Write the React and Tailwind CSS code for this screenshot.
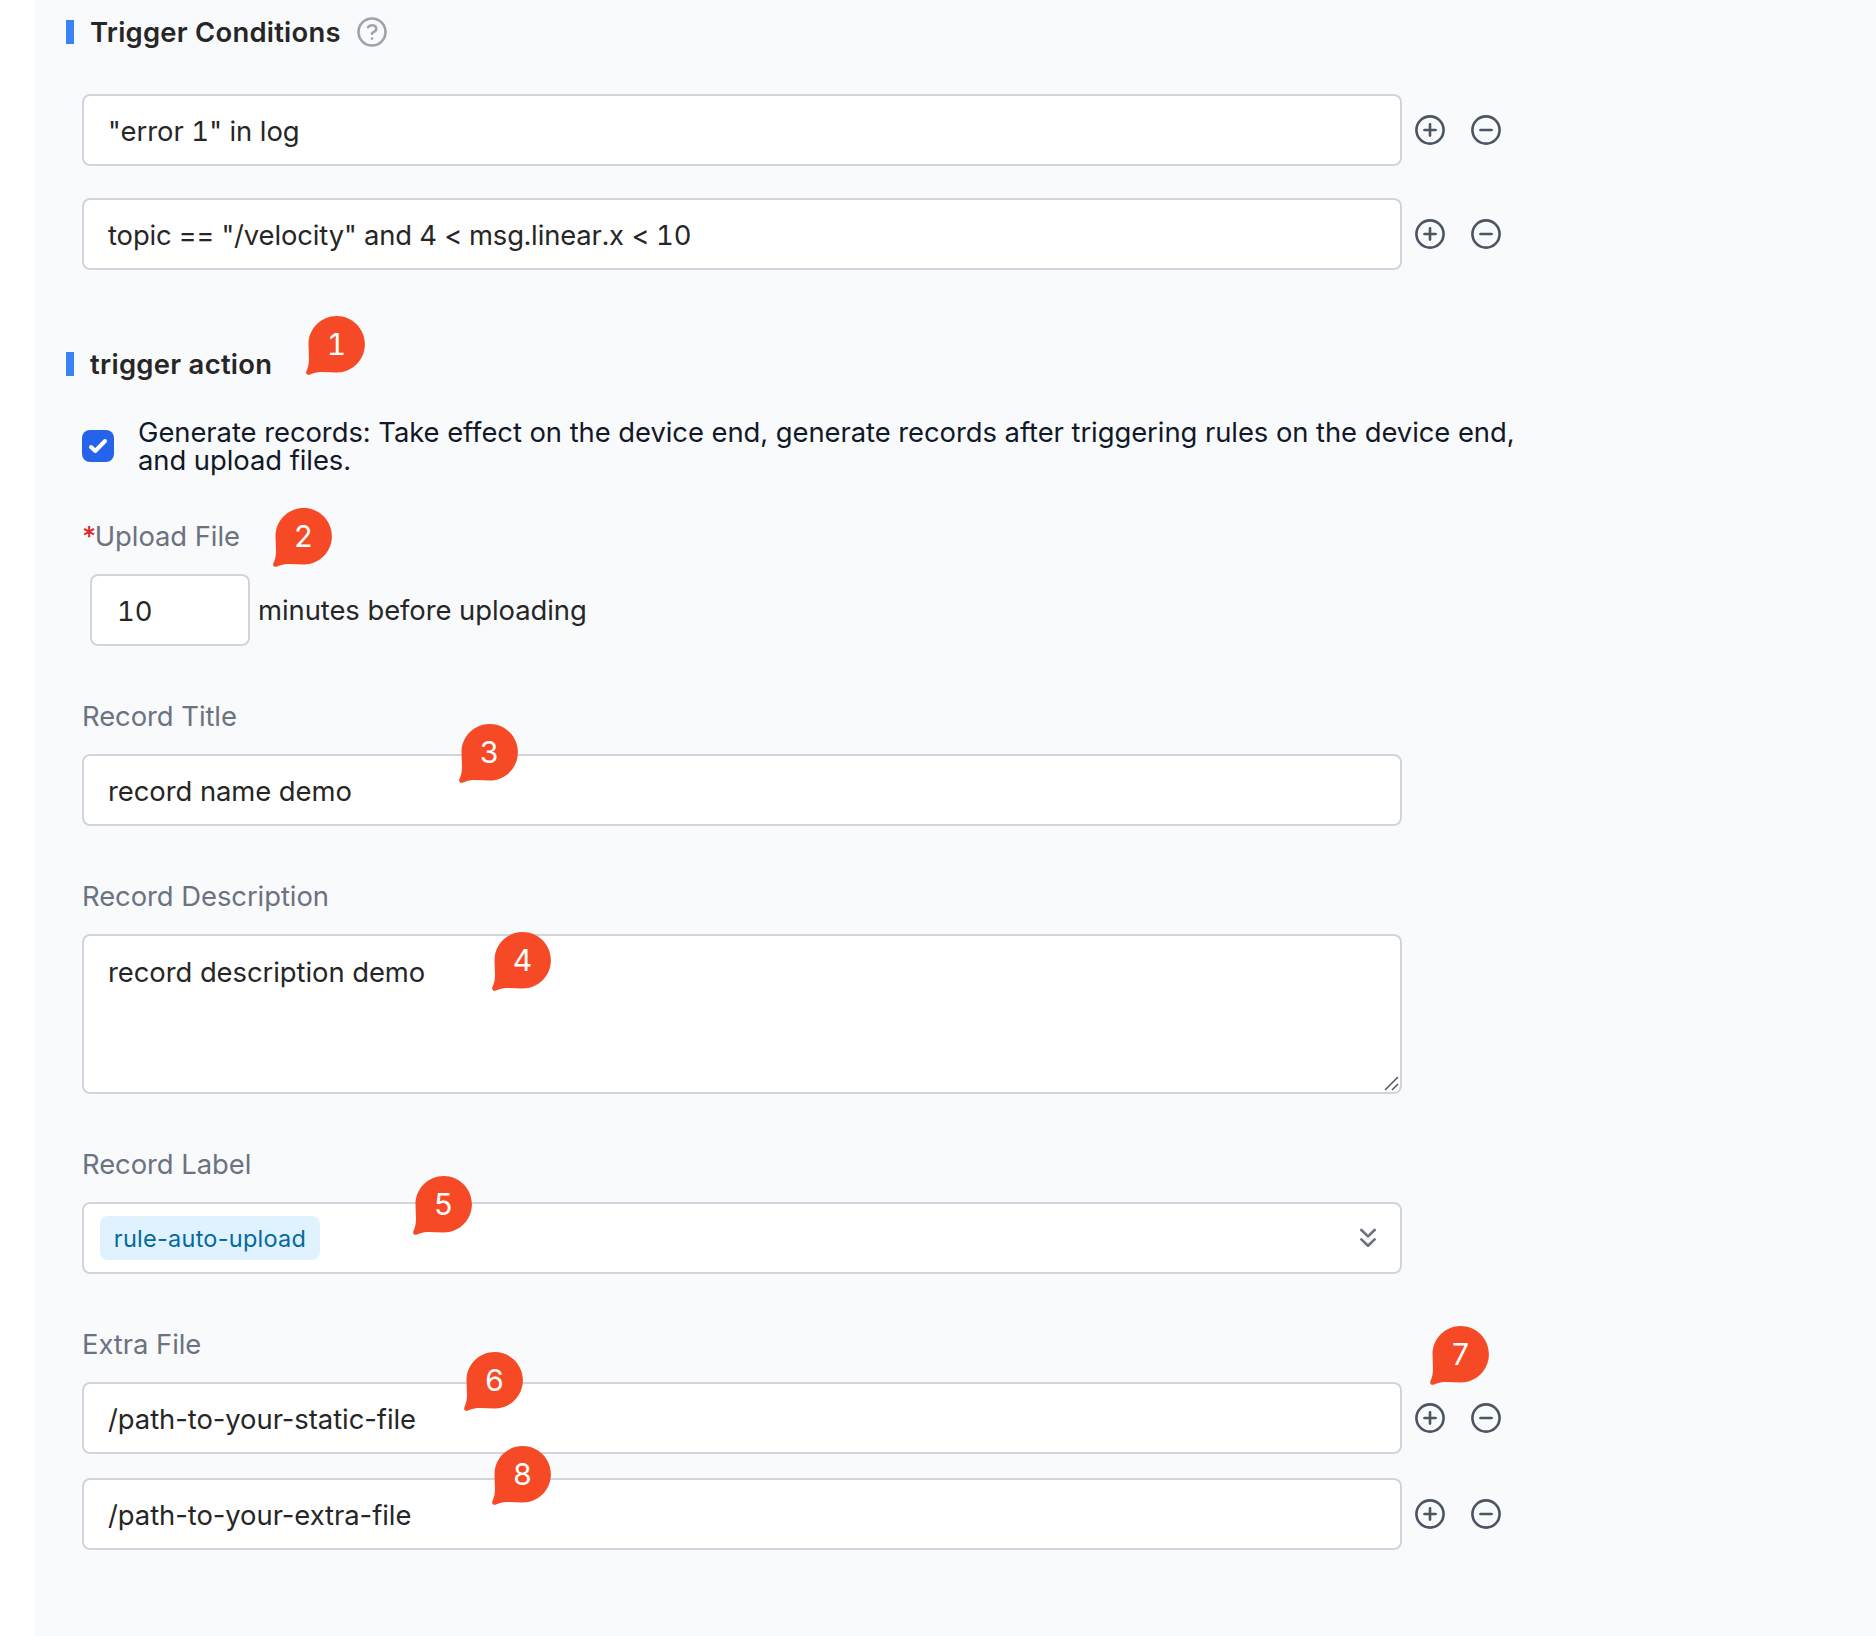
const PIN_PATH =
  "M30.7 0.1C46.3 0.1 58.9 12.7 58.9 28.3C58.9 43.9 46.3 56.5 30.7 56.5C21 56.5 12 54.6 4.6 58.3C1.6 59.9 -0.9 57.6 0.6 54.8C4.4 47 2.5 38 2.5 28.3C2.5 12.7 15.1 0.1 30.7 0.1Z";

function Pin({ n, className }) {
  return (
    <div className={`absolute h-[60px] w-[60px] ${className}`}>
      <svg viewBox="0 0 60 60" className="absolute inset-0 h-full w-full" fill="#f54a25">
        <path d={PIN_PATH} />
      </svg>
      <span className="absolute top-0 left-[2.5px] flex h-[55px] w-14 items-center justify-center text-[30px] leading-none font-normal text-white tabular-nums">
        {n}
      </span>
    </div>
  );
}

function CircleIcon({ plus }) {
  return (
    <svg viewBox="0 0 30 30" className="h-[30px] w-[30px]" fill="none" stroke="#4b5563" strokeWidth="2.6" strokeLinecap="round">
      <circle cx="15" cy="15" r="13.6" />
      <path d="M9.4 15h11.2" />
      {plus && <path d="M15 9.4v11.2" />}
    </svg>
  );
}

function Heading({ children }) {
  return (
    <div className="flex h-10 items-center">
      <div className="h-6 w-2 shrink-0 bg-[#3b82f6]" />
      <h2 className="ml-4 text-[27.4px] leading-10 font-semibold tracking-[0.3px] whitespace-nowrap">{children}</h2>
    </div>
  );
}

function Label({ required, children }) {
  return (
    <div className="leading-10 text-[#6b7280]">
      {required && <span className="font-medium tracking-[-1.5px] text-[#dc2626]">*</span>}
      {children}
    </div>
  );
}

function Field({ children, className = "w-[1320px]" }) {
  return (
    <div className={`flex h-[72px] items-center rounded-lg border-2 border-[#d1d5db] bg-white px-6 pt-0.5 leading-10 ${className}`}>
      {children}
    </div>
  );
}

function ListRow({ children }) {
  return (
    <div className="flex items-center">
      <Field>{children}</Field>
      <button className="ml-[13px]"><CircleIcon plus /></button>
      <button className="ml-[26px]"><CircleIcon /></button>
    </div>
  );
}

export default function App() {
  return (
    <div
      className="relative h-[1636px] w-[1876px] overflow-hidden bg-white pl-[34px] text-[27.4px] tracking-[-0.05px] text-[#262626]"
      style={{ fontFamily: 'Inter, "Liberation Sans", sans-serif' }}
    >
      <div className="h-full bg-[#f9fafc] pt-3 pl-8">
        <div className="flex items-center">
          <div className="w-[275px]">
            <Heading>
              <span className="tracking-[0.25px]">Trigger Conditions</span>
            </Heading>
          </div>
          <svg viewBox="0 0 30 30" className="ml-4 h-[30px] w-[30px]" fill="none" stroke="#9ca3af" strokeWidth="2.6" strokeLinecap="round" strokeLinejoin="round">
            <circle cx="15" cy="15" r="13.5" />
            <path d="M11 10.2C12.7 7.7 17 7.5 18.8 9.9C20.2 12.2 18.8 14 16.9 14.9C15.5 15.5 15 15.9 15 16.8" />
            <circle cx="15" cy="21.6" r="1.3" fill="#9ca3af" stroke="none" />
          </svg>
        </div>

        <div className="mt-[42px] flex flex-col gap-8 pl-4 tabular-nums">
          <ListRow>
            <span className="tracking-[0.05px]">"error 1" in log</span>
          </ListRow>
          <ListRow>
            <span className="tracking-[-0.11px]">topic == "/velocity" and 4 &lt; msg.linear.x &lt; 10</span>
          </ListRow>
        </div>

        <div className="mt-[74px]">
          <Heading>trigger action</Heading>
        </div>

        <div className="pl-4">
          <div className="mt-[34px] flex items-center gap-6">
            <div className="flex h-8 w-8 items-center justify-center rounded-lg bg-[#2563eb]">
              <svg viewBox="0 0 20 16" className="h-4 w-5" fill="none" stroke="white" strokeWidth="4" strokeLinecap="round" strokeLinejoin="round">
                <path d="M3 9L7.3 13L17 3" />
              </svg>
            </div>
            <p className="leading-7 text-[#111827]">
              Generate records: Take effect on the device end, generate records after triggering rules on the device end,
              <br />
              and upload files.
            </p>
          </div>

          <div className="mt-[42px] flex flex-col gap-[50px]">
            <section>
              <Label required>Upload File</Label>
              <div className="mt-[18px] flex items-center gap-2 pl-2">
                <Field className="w-40 tabular-nums">
                  <span className="pl-px">10</span>
                </Field>
                <span className="leading-10">minutes before uploading</span>
              </div>
            </section>

            <section>
              <Label>Record Title</Label>
              <div className="mt-[18px]">
                <Field>record name demo</Field>
              </div>
            </section>

            <section>
              <Label>Record Description</Label>
              <div className="mt-[18px] flex h-40 w-[1320px] justify-between rounded-lg border-2 border-[#d1d5db] bg-white pt-4 pl-6 leading-10">
                <span>record description demo</span>
                <svg viewBox="0 0 16 16" className="mr-px mb-px h-4 w-4 self-end" fill="none" stroke="#555" strokeWidth="1.5">
                  <path d="M2 15L15 2M9 15L15 9" />
                </svg>
              </div>
            </section>

            <section>
              <Label>Record Label</Label>
              <div className="mt-[18px] flex h-[72px] w-[1320px] items-center justify-between rounded-lg border-2 border-[#d1d5db] bg-white pr-6 pl-4">
                <span className="flex h-11 w-[220px] items-center justify-center rounded-lg bg-[#e0f2fe] pt-px text-[23.5px] tracking-[0.25px] text-[#0369a1]">
                  rule-auto-upload
                </span>
                <svg viewBox="0 0 16 20" className="h-5 w-4" fill="none" stroke="#6b7280" strokeWidth="2.7" strokeLinecap="round" strokeLinejoin="round">
                  <path d="M1.4 2L8 8.4L14.6 2M1.4 11.4L8 17.8L14.6 11.4" />
                </svg>
              </div>
            </section>

            <section>
              <Label>Extra File</Label>
              <div className="mt-[18px] flex flex-col gap-6">
                <ListRow>/path-to-your-static-file</ListRow>
                <ListRow>/path-to-your-extra-file</ListRow>
              </div>
            </section>
          </div>
        </div>
      </div>

      <Pin n="1" className="top-[316px] left-[306px]" />
      <Pin n="2" className="top-[508px] left-[273px]" />
      <Pin n="3" className="top-[724px] left-[459px]" />
      <Pin n="4" className="top-[932px] left-[492px]" />
      <Pin n="5" className="top-[1176px] left-[413px]" />
      <Pin n="6" className="top-[1352px] left-[464px]" />
      <Pin n="7" className="top-[1326px] left-[1430px]" />
      <Pin n="8" className="top-[1446px] left-[492px]" />
    </div>
  );
}
